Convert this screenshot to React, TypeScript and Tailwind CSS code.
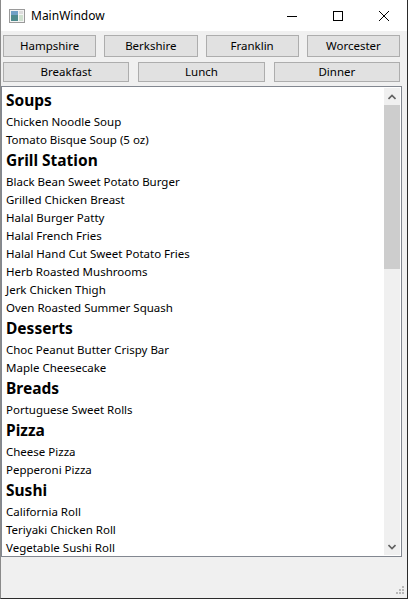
import React from "react";

const groups: { title: string; items: string[] }[] = [
  { title: "Soups", items: ["Chicken Noodle Soup", "Tomato Bisque Soup (5 oz)"] },
  {
    title: "Grill Station",
    items: [
      "Black Bean Sweet Potato Burger",
      "Grilled Chicken Breast",
      "Halal Burger Patty",
      "Halal French Fries",
      "Halal Hand Cut Sweet Potato Fries",
      "Herb Roasted Mushrooms",
      "Jerk Chicken Thigh",
      "Oven Roasted Summer Squash",
    ],
  },
  { title: "Desserts", items: ["Choc Peanut Butter Crispy Bar", "Maple Cheesecake"] },
  { title: "Breads", items: ["Portuguese Sweet Rolls"] },
  { title: "Pizza", items: ["Cheese Pizza", "Pepperoni Pizza"] },
  { title: "Sushi", items: ["California Roll", "Teriyaki Chicken Roll", "Vegetable Sushi Roll"] },
];

const font = { fontFamily: '"Noto Sans", "Open Sans", sans-serif' };

function Btn({ label, h }: { label: string; h: string }) {
  return (
    <div
      className={`flex items-center justify-center border border-[#adadad] bg-[#e1e1e1] text-[11.5px] text-black ${h}`}
    >
      {label}
    </div>
  );
}

export default function App() {
  return (
    <div
      className="flex h-[599px] w-[408px] flex-col overflow-hidden border-r border-b border-l border-r-[#2b2b2b] border-b-[#2b2b2b] border-l-[#8a8a8a] bg-[#f0f0f0]"
      style={font}
    >
      {/* Title bar */}
      <div className="flex h-[31px] shrink-0 items-center bg-white">
        <svg width="16" height="16" viewBox="0 0 16 16" className="ml-[8px]">
          <rect x="0.5" y="1.5" width="15" height="13" fill="#f4f4f4" stroke="#9a9a9a" />
          <rect x="2" y="3" width="7" height="10" fill="#4d8a8c" />
          <rect x="2" y="3" width="7" height="4" fill="#6fa0c6" />
          <rect x="10" y="3" width="4" height="3" fill="#dcdcdc" />
          <rect x="10" y="7" width="4" height="6" fill="#cfe0cf" />
        </svg>
        <div className="ml-[6px] text-[12px] text-black">MainWindow</div>
        <div className="ml-auto flex h-full">
          <div className="flex w-[46px] items-center justify-center">
            <svg width="10" height="10" viewBox="0 0 10 10">
              <line x1="0" y1="5.5" x2="10" y2="5.5" stroke="#000" strokeWidth="1" />
            </svg>
          </div>
          <div className="flex w-[46px] items-center justify-center">
            <svg width="10" height="10" viewBox="0 0 10 10">
              <rect x="0.5" y="0.5" width="9" height="9" fill="none" stroke="#000" strokeWidth="1" />
            </svg>
          </div>
          <div className="flex w-[46px] items-center justify-center">
            <svg width="10" height="10" viewBox="0 0 10 10">
              <path d="M0 0 L10 10 M10 0 L0 10" stroke="#000" strokeWidth="1" />
            </svg>
          </div>
        </div>
      </div>

      {/* Buttons */}
      <div className="mt-[4px] grid grid-cols-4 gap-x-[8px] pl-[2px] pr-[7px]">
        <Btn label="Hampshire" h="h-[22px]" />
        <Btn label="Berkshire" h="h-[22px]" />
        <Btn label="Franklin" h="h-[22px]" />
        <Btn label="Worcester" h="h-[22px]" />
      </div>
      <div className="mt-[5px] grid grid-cols-3 gap-x-[9px] pl-[2px] pr-[7px]">
        <Btn label="Breakfast" h="h-[20px]" />
        <Btn label="Lunch" h="h-[20px]" />
        <Btn label="Dinner" h="h-[20px]" />
      </div>

      {/* List */}
      <div className="mt-[4px] mr-[5px] flex h-[471px] border border-[#828790] bg-white">
        <div className="flex-1 overflow-hidden pt-[2px] pl-[4px]">
          {groups.map((g) => (
            <div key={g.title}>
              <div className="flex h-[24px] items-center text-[15.5px] leading-none font-bold text-black">
                {g.title}
              </div>
              {g.items.map((it) => (
                <div key={it} className="flex h-[18px] items-center text-[11.5px] leading-none text-black">
                  {it}
                </div>
              ))}
            </div>
          ))}
        </div>
        <div className="my-[1px] mr-[1px] flex w-[16px] flex-col bg-[#f0f0f0]">
          <div className="flex h-[17px] items-center justify-center">
            <svg width="8" height="6" viewBox="0 0 8 6">
              <path d="M0.5 5 L4 1.5 L7.5 5" fill="none" stroke="#606060" strokeWidth="1.6" />
            </svg>
          </div>
          <div className="h-[164px] bg-[#cdcdcd]" />
          <div className="flex-1" />
          <div className="flex h-[17px] items-center justify-center">
            <svg width="8" height="6" viewBox="0 0 8 6">
              <path d="M0.5 1 L4 4.5 L7.5 1" fill="none" stroke="#606060" strokeWidth="1.6" />
            </svg>
          </div>
        </div>
      </div>

      {/* Status area */}
      <div className="relative flex-1">
        <svg width="10" height="10" viewBox="0 0 10 10" className="absolute right-[2px] bottom-[2px]">
          <rect x="7" y="0" width="2" height="2" fill="#b8b8b8" />
          <rect x="4" y="3" width="2" height="2" fill="#b8b8b8" />
          <rect x="7" y="3" width="2" height="2" fill="#b8b8b8" />
          <rect x="1" y="6" width="2" height="2" fill="#b8b8b8" />
          <rect x="4" y="6" width="2" height="2" fill="#b8b8b8" />
          <rect x="7" y="6" width="2" height="2" fill="#b8b8b8" />
        </svg>
      </div>
    </div>
  );
}
